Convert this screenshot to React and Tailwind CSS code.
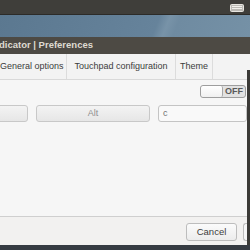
export default function App() {
  const font = { fontFamily: '"Liberation Sans", "Open Sans", sans-serif' }

  return (
    <div className="flex h-[250px] w-[250px] flex-col overflow-hidden bg-[#f4f4f4]" style={font}>
      {/* top panel */}
      <div className="flex h-[15px] items-center justify-end border-b border-[#2c2b28] bg-[#3f3e3a] pr-[6px]">
        <svg width="14" height="8" viewBox="0 0 14 8" className="mt-[1px]">
          <rect x="0.5" y="0.5" width="13" height="7" rx="1" fill="#bcbab5" stroke="#e8e6e1" />
          <rect x="2" y="2" width="10" height="1" fill="#f2f0ec" />
          <rect x="2" y="4" width="10" height="1" fill="#f2f0ec" />
        </svg>
      </div>

      {/* blue bar */}
      <div className="h-[22px] bg-[linear-gradient(112deg,#5b7890_0%,#66839b_62%,#7893a8_66%,#6f8ba1_70%,#7591a6_100%)]" />

      {/* title bar */}
      <div className="flex h-[17px] items-center bg-[#4d4a44] text-[9.5px] font-bold text-[#dfdbd2]">
        <span className="-ml-[1px]">dicator | Preferences</span>
      </div>

      {/* tabs */}
      <div className="flex h-[26px] items-stretch border-b border-[#d9d9d9] bg-[#f3f3f3] text-[9px] text-[#3c3c3c]">
        <div className="flex w-[67px] items-center border-r border-[#dcdcdc] pl-0">General options</div>
        <div className="flex w-[109px] items-center justify-center border-r border-[#dcdcdc]">Touchpad configuration</div>
        <div className="flex w-[37px] items-center justify-center border-r border-[#dcdcdc]">Theme</div>
        <div className="flex-1" />
      </div>

      <div className="flex flex-1">
        <div className="flex flex-1 flex-col">
          <div className="flex-1 bg-[#f6f6f6]">
            {/* switch row */}
            <div className="flex justify-end pr-[1px] pt-[5px]">
              <div className="flex h-[13px] w-[46px] overflow-hidden rounded-[3px] border border-[#9e9e9e] bg-[#e2e2e2]">
                <div className="w-[22px] rounded-[2px] border-r border-[#a8a8a8] bg-[linear-gradient(#ffffff,#f0f0f0)]" />
                <div className="flex flex-1 items-center justify-center text-[9px] font-bold leading-none text-[#5a5a5a]">OFF</div>
              </div>
            </div>

            {/* shortcut row */}
            <div className="mt-[7px] flex h-[17px] gap-[8px]">
              <div className="-ml-[6px] w-[34px] rounded-[3px] border border-[#c8c8c8] bg-[linear-gradient(#f3f3f3,#e6e6e6)]" />
              <div className="flex w-[114px] items-center justify-center rounded-[3px] border border-[#c8c8c8] bg-[linear-gradient(#f3f3f3,#e6e6e6)] text-[9px] text-[#8e8e8e]">
                Alt
              </div>
              <div className="flex flex-1 items-center rounded-[3px] border border-[#c4c4c4] bg-[#f9f9f9] pl-[4px] text-[9px] text-[#707070]">
                c
              </div>
            </div>
          </div>

          {/* action area */}
          <div className="flex h-[29px] items-start justify-end gap-[6px] border-t border-[#cfcfcf] bg-[#f2f1f0] pt-[6px]">
            <button className="flex h-[18px] w-[51px] items-center justify-center rounded-[3px] border border-[#bdbdbd] bg-[linear-gradient(#fbfbfb,#ececec)] text-[9.5px] text-[#3c3c3c]">
              Cancel
            </button>
            <div className="h-[18px] w-[4px] rounded-l-[3px] border border-r-0 border-[#bdbdbd] bg-[#f6f6f6]" />
          </div>
        </div>
        <div className="mt-[-10px] w-[3px] bg-[#3b3a37]" />
      </div>

      <div className="h-[5px] bg-[#363b42]" />
    </div>
  )
}
